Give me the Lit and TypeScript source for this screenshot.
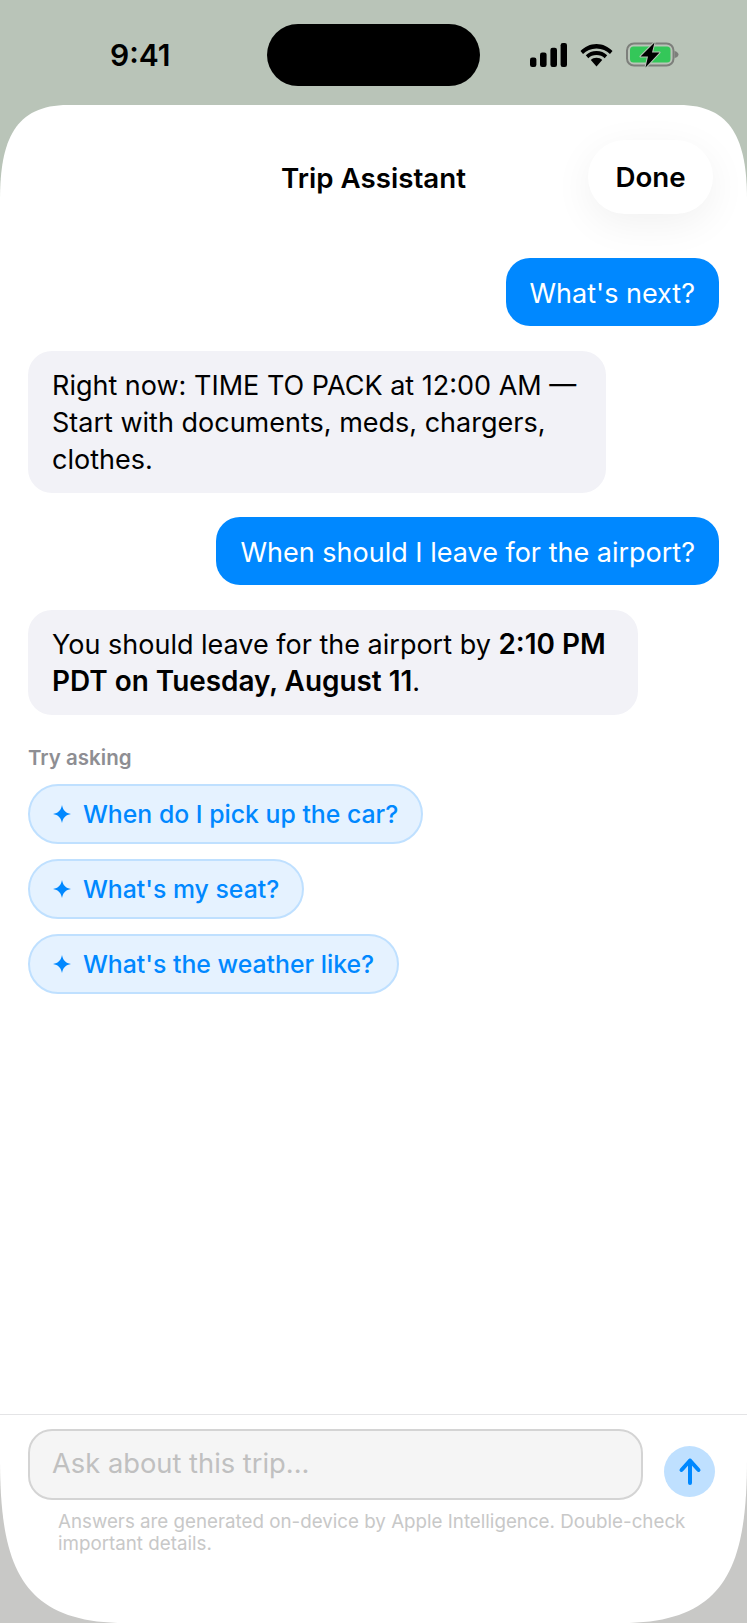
import { LitElement, html, css } from "lit";
import { customElement } from "lit/decorators.js";

const sparkle = html`<svg class="spark" viewBox="0 0 18 18" aria-hidden="true"><path d="M9 0 C9.9 5.2 12.8 8.1 18 9 C12.8 9.9 9.9 12.8 9 18 C8.1 12.8 5.2 9.9 0 9 C5.2 8.1 8.1 5.2 9 0 Z" fill="currentColor"/></svg>`;

@customElement("app-root")
export class AppRoot extends LitElement {
  static styles = css`
    :host {
      display: block;
      width: 747px;
      height: 1623px;
      font-family: Inter, "Liberation Sans", sans-serif;
      background: linear-gradient(#b9c4b8 0 800px, #c8c8c6 800px);
      overflow: hidden;
      color: #000;
    }
    .status {
      height: 105px;
      display: flex;
      align-items: flex-start;
      box-sizing: border-box;
      padding: 24px 0 0 0;
    }
    .time {
      width: 110px;
      margin-left: 110px;
      font-size: 30px;
      font-weight: 600;
      line-height: 62px;
      margin-right: 47px;
    }
    .island {
      width: 213px;
      height: 62px;
      border-radius: 31px;
      background: #000;
    }
    .indicators {
      display: flex;
      align-items: center;
      height: 62px;
      margin-left: 50px;
    }
    .signal { margin-right: 13px; }
    .wifi { margin-right: 13px; }
    .sheet {
      height: 1518px;
      background: #fff;
      clip-path: path("M0 95 C0 35 15 0 68 0 L679 0 C732 0 747 35 747 95 L747 1353 C747 1460 727 1518 622 1518 L125 1518 C20 1518 0 1460 0 1353 Z");
      display: flex;
      flex-direction: column;
    }
    .nav {
      height: 110px;
      flex: none;
      display: flex;
      align-items: flex-start;
      justify-content: flex-end;
      box-sizing: border-box;
      padding: 35px 34px 0 0;
      position: relative;
    }
    .title {
      position: absolute;
      left: 0;
      right: 0;
      top: 36px;
      height: 74px;
      line-height: 74px;
      text-align: center;
      font-size: 27.7px;
      font-weight: 600;
    }
    .done {
      width: 125px;
      height: 74px;
      border-radius: 37px;
      background: #fff;
      box-shadow: 0 10px 40px rgba(0, 0, 0, 0.06);
      display: flex;
      align-items: center;
      justify-content: center;
      font-size: 27.7px;
      font-weight: 600;
      position: relative;
    }
    .chat {
      flex: 1;
      display: flex;
      flex-direction: column;
      padding: 43px 28px 0 28px;
      align-items: flex-start;
    }
    .bubble {
      box-sizing: border-box;
      padding: 16.5px 24px 14.5px;
      border-radius: 24px;
      font-size: 27px;
      line-height: 37px;
      margin-bottom: 24.6px;
    }
    .me {
      align-self: flex-end;
      background: #0088ff;
      color: #fff;
    }
    .ai {
      background: #f2f2f7;
      color: #000;
    }
    .w1 { width: 578px; }
    .w2 { width: 610px; }
    .ai b { font-weight: 600; font-size: 27.9px; }
    .hint {
      font-size: 20.5px;
      font-weight: 600;
      color: #8e8e93;
      line-height: 24px;
      margin: 7px 0 14px;
    }
    .chips {
      display: flex;
      flex-direction: column;
      align-items: flex-start;
      gap: 15px;
    }
    .chip {
      box-sizing: border-box;
      height: 60px;
      border-radius: 30px;
      border: 2px solid #bfe0ff;
      background: #e5f2ff;
      color: #0088ff;
      display: flex;
      align-items: center;
      gap: 12px;
      padding: 0 23px;
      font-size: 24.8px;
      font-weight: 500;
    }
    .spark { width: 18px; height: 18px; flex: none; }
    .composer {
      flex: none;
      border-top: 1.5px solid #e4e4e6;
      height: 209px;
      box-sizing: border-box;
      padding: 14px 28px 0 28px;
    }
    .row {
      display: flex;
      align-items: center;
      gap: 21px;
    }
    .input {
      box-sizing: border-box;
      width: 615px;
      height: 71px;
      border: 2px solid #d4d4d4;
      background: #f5f5f5;
      border-radius: 24px;
      padding: 0 22px 2px;
      display: flex;
      align-items: center;
      font-size: 27.3px;
      color: #c0c0c0;
    }
    .send {
      width: 51px;
      height: 51px;
      border-radius: 50%;
      background: #bfe0ff;
      display: flex;
      align-items: center;
      justify-content: center;
      margin-top: 14px;
    }
    .send svg { width: 24px; height: 30px; }
    .foot {
      margin: 11px 0 0 30px;
      width: 640px;
      font-size: 18.75px;
      line-height: 22px;
      color: #c8c8c8;
    }
  `;

  render() {
    return html`
      <div class="status">
        <div class="time">9:41</div>
        <div class="island"></div>
        <div class="indicators">
          <svg class="signal" width="37" height="24" viewBox="0 0 37 24" aria-hidden="true">
            <rect x="0" y="14.5" width="6.4" height="9.5" rx="2.2" fill="#000"/>
            <rect x="10" y="9.5" width="6.6" height="14.5" rx="2.2" fill="#000"/>
            <rect x="20.4" y="4.8" width="6.6" height="19.2" rx="2.2" fill="#000"/>
            <rect x="30.6" y="0" width="6.4" height="24" rx="2.2" fill="#000"/>
          </svg>
          <svg class="wifi" width="33" height="24" viewBox="0 0 33 24" aria-hidden="true">
            <path d="M16.5 5.5 C22 5.5 26.6 7.6 30 11 L32.5 8 C28.4 3.8 22.8 1 16.5 1 C10.2 1 4.6 3.8 .5 8 L3 11 C6.4 7.6 11 5.5 16.5 5.5 Z" fill="#000"/>
            <path d="M16.5 12 C19.8 12 22.6 13.2 24.7 15.2 L27.2 12.2 C24.4 9.6 20.7 8 16.5 8 C12.3 8 8.6 9.6 5.8 12.2 L8.3 15.2 C10.4 13.2 13.2 12 16.5 12 Z" fill="#000"/>
            <path d="M16.5 14.8 C14.2 14.8 12.2 15.6 10.8 17 L16.5 23.5 L22.2 17 C20.8 15.6 18.8 14.8 16.5 14.8 Z" fill="#000"/>
          </svg>
          <svg width="53" height="26" viewBox="0 0 53 26" aria-hidden="true">
            <rect x="1" y="1.5" width="46.5" height="22" rx="7" fill="none" stroke="#7d7f7b" stroke-width="2"/>
            <rect x="4" y="4.5" width="40.5" height="16" rx="3.5" fill="#34c759"/>
            <path d="M48.5 9 C51 9.5 52.5 11 52.5 12.5 C52.5 14 51 15.5 48.5 16 Z" fill="#7d7f7b"/>
            <path d="M28.5 0.5 L14.5 14.5 L22 14.5 L19.5 25.5 L33.5 10.5 L26 10.5 Z" fill="#000" stroke="#b9c4b8" stroke-width="2" stroke-linejoin="round" paint-order="stroke"/>
          </svg>
        </div>
      </div>
      <div class="sheet">
        <div class="nav">
          <div class="title">Trip Assistant</div>
          <div class="done">Done</div>
        </div>
        <div class="chat">
          <div class="bubble me">What's next?</div>
          <div class="bubble ai w1">Right now: TIME TO PACK at 12:00 AM — Start with documents, meds, chargers, clothes.</div>
          <div class="bubble me">When should I leave for the airport?</div>
          <div class="bubble ai w2">You should leave for the airport by <b>2:10 PM</b> <b>PDT on Tuesday, August 11</b>.</div>
          <div class="hint">Try asking</div>
          <div class="chips">
            <div class="chip">${sparkle}When do I pick up the car?</div>
            <div class="chip">${sparkle}What's my seat?</div>
            <div class="chip">${sparkle}What's the weather like?</div>
          </div>
        </div>
        <div class="composer">
          <div class="row">
            <div class="input">Ask about this trip...</div>
            <div class="send">
              <svg viewBox="0 0 24 30" aria-hidden="true">
                <path d="M12 26 V3.5 M3.5 13 L12 3.5 L20.5 13" fill="none" stroke="#0088ff" stroke-width="4" stroke-linecap="round" stroke-linejoin="round"/>
              </svg>
            </div>
          </div>
          <div class="foot">Answers are generated on-device by Apple Intelligence. Double-check important details.</div>
        </div>
      </div>
    `;
  }
}
